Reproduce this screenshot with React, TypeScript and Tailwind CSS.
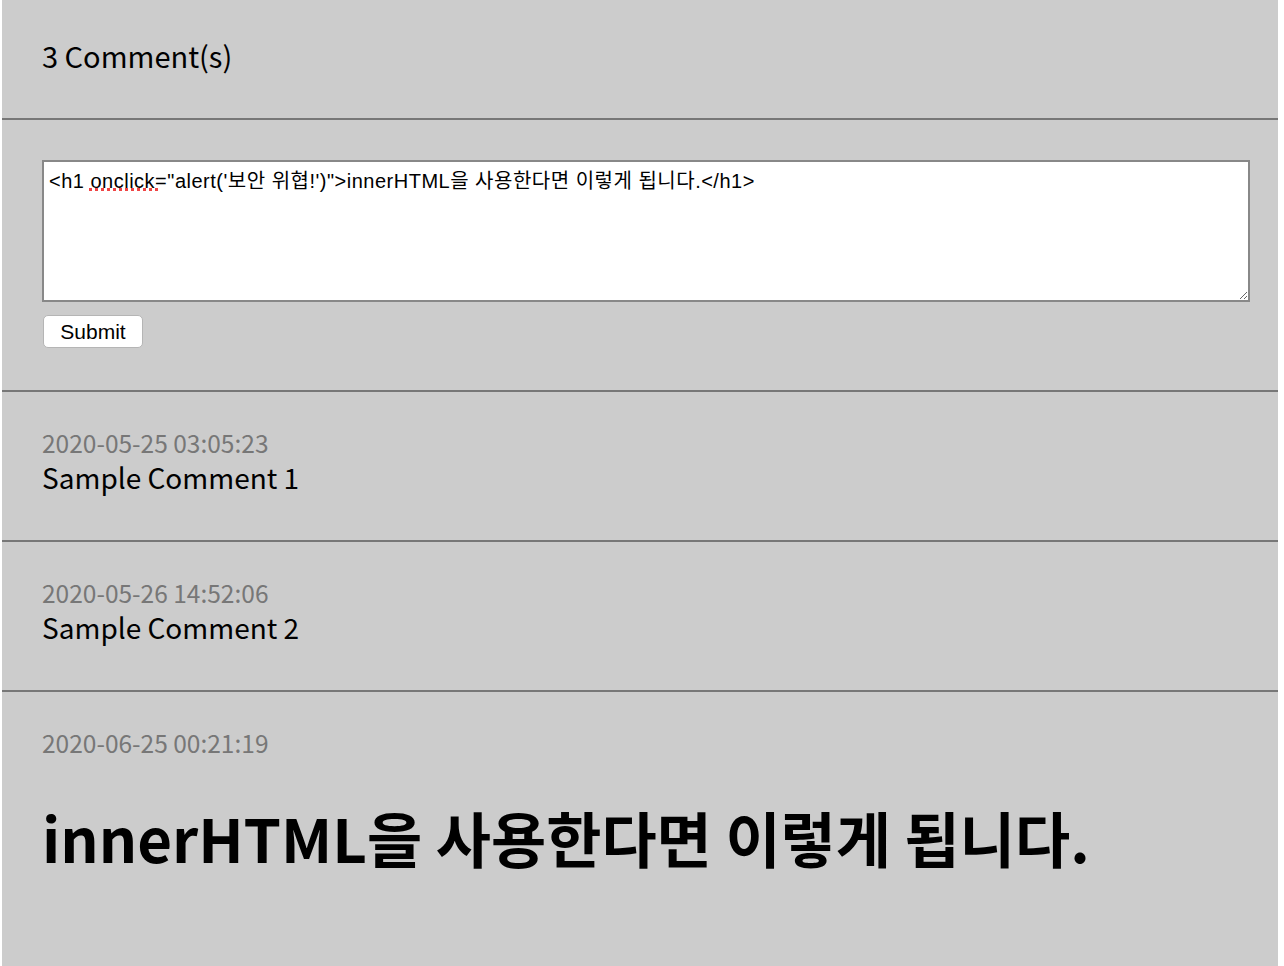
import React from "react";

const comments = [
  { date: "2020-05-25 03:05:23", body: "Sample Comment 1" },
  { date: "2020-05-26 14:52:06", body: "Sample Comment 2" },
];

const font = { fontFamily: '"Noto Sans CJK KR", "Noto Sans", sans-serif' };

const App = () => {
  return (
    <div className="min-h-[966px] bg-white">
      <div
        className="ml-[2px] w-[1276px] min-h-[966px] bg-[#cccccc] text-black"
        style={font}
      >
        <div className="px-[40px] pt-[36px] pb-[44px] border-b-2 border-[#777777]">
          <p className="text-[29px] leading-[38px]">3 Comment(s)</p>
        </div>

        <div className="px-[40px] pt-[40px] pb-[42px] border-b-2 border-[#777777]">
          <div className="relative">
            <textarea
              spellCheck={false}
              className="block w-[1208px] h-[142px] bg-white border-2 border-[#888888] px-[5px] py-[7px] text-[20px] leading-[24px] tracking-[0.5px] text-black font-['Liberation_Sans','Noto_Sans_CJK_KR',sans-serif] outline-none"
              defaultValue={`<h1 onclick="alert('보안 위협!')">innerHTML을 사용한다면 이렇게 됩니다.</h1>`}
            />
            {/* spellcheck squiggle under "onclick" */}
            <span className="absolute left-[47px] top-[28px] w-[69px] h-[3px] border-b-[3px] border-dotted border-[#ef4444]" />
          </div>
          <button className="mt-[13px] ml-px w-[100px] h-[33px] bg-white border border-[#b5b5b5] rounded-[5px] text-[21px] leading-[31px] text-black font-['Liberation_Sans',Arial,sans-serif]">
            Submit
          </button>
        </div>

        {comments.map((c) => (
          <div
            key={c.date}
            className="px-[40px] pt-[37px] pb-[43px] border-b-2 border-[#777777]"
          >
            <div className="text-[24.5px] leading-[28px] text-[#777777]">
              {c.date}
            </div>
            <div className="text-[28px] leading-[40px]">{c.body}</div>
          </div>
        ))}

        <div className="px-[40px] pt-[37px] pb-[60px]">
          <div className="text-[24.5px] leading-[28px] text-[#777777]">
            2020-06-25 00:21:19
          </div>
          <h1 className="mt-[38px] text-[60px] leading-[84px] font-bold">
            innerHTML을 사용한다면 이렇게 됩니다.
          </h1>
        </div>
      </div>
    </div>
  );
};

export default App;
